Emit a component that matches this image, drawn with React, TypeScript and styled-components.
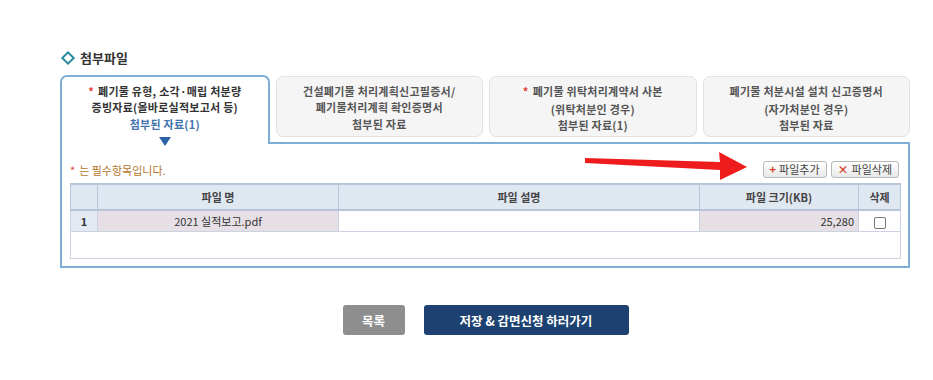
import React from "react";
import styled, { createGlobalStyle } from "styled-components";

const Global = createGlobalStyle`
  html, body { margin: 0; padding: 0; background: #fff; }
  body { font-family: "Noto Sans CJK KR", "Noto Sans", sans-serif; color: #333; }
`;

const Page = styled.div`
  position: relative;
  width: 933px;
  height: 380px;
  padding: 48px 0 0 60px;
  box-sizing: border-box;
`;

const Section = styled.div`
  width: 850px;
`;

const Title = styled.h3`
  display: flex;
  align-items: center;
  gap: 7px;
  margin: 0 0 7px 3px;
  font-size: 13px;
  font-weight: 700;
  color: #333;
  line-height: 20px;
`;

const Diamond = styled.span`
  width: 6px;
  height: 6px;
  border: 2.5px solid #2a8c9c;
  transform: rotate(45deg);
  box-sizing: content-box;
  background: #fff;
`;

const Tabs = styled.div`
  display: flex;
  gap: 6px;
  align-items: flex-start;
  position: relative;
  z-index: 2;
`;

const Tab = styled.div<{ $active?: boolean }>`
  flex: 1 1 0;
  box-sizing: border-box;
  text-align: center;
  font-size: 11px;
  letter-spacing: 0.25px;
  font-weight: 700;
  line-height: 16px;
  padding-top: 6px;
  border-radius: 7px 7px ${(p) => (p.$active ? "0 0" : "7px 7px")};
  ${(p) =>
    p.$active
      ? `
    height: 69px;
    margin-top: 0;
    background: #fff;
    border: 2px solid #7eaed6;
    border-bottom: none;
    color: #333;
  `
      : `
    height: 61px;
    margin-top: 1px;
    background: #f5f5f5;
    border: 1px solid #e2e2e2;
    color: #555;
  `}
`;

const Req = styled.span`
  color: #e53935;
  margin-right: 4px;
`;

const Sub = styled.div<{ $blue?: boolean; $gap?: number }>`
  margin-top: ${(p) => p.$gap ?? 0}px;
  color: ${(p) => (p.$blue ? "#3f74ad" : "inherit")};
  font-weight: 700;
`;

const Caret = styled.div`
  width: 0;
  height: 0;
  margin: 5px auto 0;
  border-left: 6px solid transparent;
  border-right: 6px solid transparent;
  border-top: 9px solid #2c62a6;
`;

const Panel = styled.div`
  margin-top: -2px;
  border: 2px solid #7eaed6;
  height: 126px;
  box-sizing: border-box;
  padding: 14px 9px 0 8px;
  position: relative;
  z-index: 1;
`;

const Toolbar = styled.div`
  display: flex;
  justify-content: space-between;
  align-items: center;
  height: 20px;
  margin-bottom: 5px;
`;

const Note = styled.span`
  font-size: 11px;
  color: #b5742a;
  padding-top: 4px;
`;

const Buttons = styled.div`
  display: flex;
  gap: 4px;
  padding-top: 2px;
`;

const SmallButton = styled.button`
  display: flex;
  align-items: center;
  gap: 3px;
  height: 17px;
  padding: 0 6px;
  font-family: inherit;
  font-size: 11px;
  color: #444;
  background: linear-gradient(#ffffff, #e9e9e9);
  border: 1px solid #b9b9b9;
  border-radius: 3px;
  cursor: pointer;
`;

const Glyph = styled.span`
  color: #d23b1f;
  font-weight: 700;
  font-size: 11px;
  line-height: 1;
`;

const Table = styled.table`
  width: 830px;
  border-collapse: collapse;
  font-size: 11px;
  table-layout: fixed;
`;

const Th = styled.th`
  height: 24px;
  background: #dfe7f1;
  border: 1px solid #b8c4d8;
  border-top: 2px solid #b8c4d8;
  border-bottom: 2px solid #b8c4d8;
  color: #444;
  font-weight: 700;
  padding: 0;
`;

const Td = styled.td<{ $bg?: string; $align?: string }>`
  height: 20px;
  border: 1px solid #ccd3e0;
  background: ${(p) => p.$bg ?? "#fff"};
  text-align: ${(p) => p.$align ?? "center"};
  padding: 0 4px;
  color: #333;
`;

const EmptyRow = styled.td`
  height: 24px;
  border: 1px solid #ccd3e0;
  border-top: none;
`;

const Check = styled.span`
  display: inline-block;
  width: 10px;
  height: 10px;
  border: 1px solid #777;
  border-radius: 2px;
  vertical-align: middle;
`;

const Actions = styled.div`
  display: flex;
  justify-content: center;
  gap: 19px;
  margin-top: 37px;
  padding-right: 22px;
`;

const BigButton = styled.button<{ $primary?: boolean }>`
  height: 30px;
  padding: 0;
  border: none;
  border-radius: 3px;
  font-family: inherit;
  font-size: 12.5px;
  font-weight: 700;
  color: #fff;
  white-space: nowrap;
  background: ${(p) => (p.$primary ? "#1d4272" : "#8e8e8e")};
  width: ${(p) => (p.$primary ? "205px" : "62px")};
`;

const Arrow = styled.svg`
  position: absolute;
  left: 580px;
  top: 147px;
  z-index: 5;
`;

export default function App() {
  return (
    <Page>
      <Global />
      <Section>
        <Title>
          <Diamond />
          첨부파일
        </Title>
        <Tabs>
          <Tab $active>
            <div>
              <Req>*</Req>폐기물 유형, 소각·매립 처분량
            </div>
            <div>증빙자료(올바로실적보고서 등)</div>
            <Sub $blue $gap={1}>첨부된 자료(1)</Sub>
            <Caret />
          </Tab>
          <Tab>
            <div>건설폐기물 처리계획신고필증서/</div>
            <div>폐기물처리계획 확인증명서</div>
            <Sub $gap={1}>첨부된 자료</Sub>
          </Tab>
          <Tab>
            <div>
              <Req>*</Req>폐기물 위탁처리계약서 사본
            </div>
            <Sub $gap={2}>(위탁처분인 경우)</Sub>
            <Sub>첨부된 자료(1)</Sub>
          </Tab>
          <Tab>
            <div>폐기물 처분시설 설치 신고증명서</div>
            <Sub $gap={2}>(자가처분인 경우)</Sub>
            <Sub>첨부된 자료</Sub>
          </Tab>
        </Tabs>
        <Panel>
          <Toolbar>
            <Note>
              <Req>*</Req>는 필수항목입니다.
            </Note>
            <Buttons>
              <SmallButton>
                <Glyph>+</Glyph>파일추가
              </SmallButton>
              <SmallButton>
                <Glyph>×</Glyph>파일삭제
              </SmallButton>
            </Buttons>
          </Toolbar>
          <Table>
            <colgroup>
              <col style={{ width: 27 }} />
              <col style={{ width: 241 }} />
              <col style={{ width: 361 }} />
              <col style={{ width: 159 }} />
              <col style={{ width: 42 }} />
            </colgroup>
            <thead>
              <tr>
                <Th />
                <Th>파일 명</Th>
                <Th>파일 설명</Th>
                <Th>파일 크기(KB)</Th>
                <Th>삭제</Th>
              </tr>
            </thead>
            <tbody>
              <tr>
                <Td $bg="#e4eaf4" style={{ fontWeight: 700 }}>1</Td>
                <Td $bg="#e6dfe5">2021 실적보고.pdf</Td>
                <Td />
                <Td $bg="#e6dfe5" $align="right">25,280</Td>
                <Td>
                  <Check />
                </Td>
              </tr>
              <tr>
                <EmptyRow colSpan={5} />
              </tr>
            </tbody>
          </Table>
        </Panel>
      </Section>
      <Actions>
        <BigButton>목록</BigButton>
        <BigButton $primary>저장 &amp; 감면신청 하러가기</BigButton>
      </Actions>
      <Arrow width="170" height="36" viewBox="0 0 170 36">
        <polygon points="5,11 140,15 139,5 167,20 140,33 140,23 5,16" fill="#ee1c1c" />
      </Arrow>
    </Page>
  );
}
